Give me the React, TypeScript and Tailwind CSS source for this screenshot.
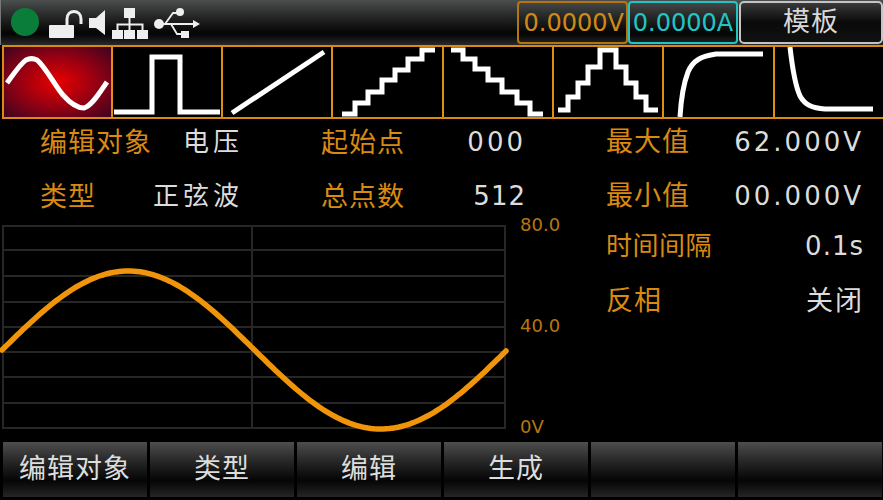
const cjk = { fontFamily: '"DejaVu Sans", "Noto Sans CJK SC", sans-serif' };

const cells: { x: number; w: number; d: string; active?: boolean }[] = [
  { x: 4, w: 109, d: "M7 83 C13 75 20 64 26 60 C30 58 33 58 37 60 C45 66 55 86 63 95 C70 103 78 108 84 108 C92 106 100 92 107 82", active: true },
  { x: 113, w: 110, d: "M114 112 H152 V57 H180 V112 H220" },
  { x: 223, w: 110, d: "M232 113 L324 52" },
  { x: 333, w: 111, d: "M342 114 H355 V103 H368 V92 H382 V80 H395 V70 H408 V59 H422 V50 H435" },
  { x: 444, w: 110, d: "M451 50 H463 V59 H475 V69 H488 V80 H502 V92 H517 V103 H530 V114 H543" },
  { x: 554, w: 110, d: "M558 110 H568 V97 H578 V83 H588 V67 H600 V50 H616 V67 H626 V83 H636 V97 H646 V110 H658" },
  { x: 664, w: 111, d: "M680 117 C681 100 683 85 688 72 C693 60 702 56 716 54 H763" },
  { x: 775, w: 108, d: "M790 47 C792 65 795 85 800 96 C805 105 812 108 825 109 H873" },
];

function sinePath() {
  const pts: string[] = [];
  for (let x = 2; x <= 507; x += 3) {
    const y = 350 - 79 * Math.sin(((x - 2) / 505) * 2 * Math.PI);
    pts.push(`${x},${(y - 223).toFixed(1)}`);
  }
  return "M" + pts.join(" L");
}

function Pair({ label, value, lw, vw, vc }: { label: string; value: string; lw: string; vw: string; vc: string }) {
  return (
    <div className="flex items-center">
      <span className={`${lw} whitespace-nowrap text-[27px] leading-none tracking-[1px] text-[#d98a12]`}>{label}</span>
      <span className={`${vw} ${vc} whitespace-nowrap text-right leading-none text-[#dcdcdc]`}>{value}</span>
    </div>
  );
}

export default function App() {
  return (
    <div className="flex h-[500px] w-[883px] flex-col overflow-hidden bg-black" style={cjk}>
      {/* status bar */}
      <div className="flex h-[45px] items-center justify-between border-l border-l-[#777] bg-gradient-to-b from-[#4b4f4d] via-[#050505] via-75% to-[#2a2a2a]">
        <svg width="205" height="45" viewBox="0 0 205 45">
          <circle cx="24" cy="22" r="14" fill="#0a7d3b" />
          <rect x="48" y="25" width="25" height="13" rx="1" fill="#eee" />
          <path d="M66 25 V19 C66 9 80 9 80 19 V24" fill="none" stroke="#eee" strokeWidth="3" />
          <path d="M88 18 H95 L104 10 V35 L95 28 H88 Z" fill="#eee" />
          <g fill="#eee">
            <rect x="123" y="8" width="11" height="10" />
            <rect x="111" y="30" width="11" height="9" />
            <rect x="123" y="30" width="11" height="9" />
            <rect x="136" y="30" width="11" height="9" />
          </g>
          <path d="M128.500 18 V30 M116.500 30 V24.500 H141.500 V30" fill="none" stroke="#eee" strokeWidth="2" />
          <circle cx="158" cy="24" r="5" fill="#eee" />
          <circle cx="179" cy="12" r="4" fill="#eee" />
          <rect x="180" y="31" width="8" height="7" fill="#eee" />
          <path d="M158 24 H194 M164 24 L172 13 H176 M170 24 L176 34 H181" fill="none" stroke="#eee" strokeWidth="1.800" />
          <path d="M192 20 L199 24 L192 28 Z" fill="#eee" />
        </svg>
        <div className="flex h-full items-center py-px">
          <div className="flex h-[43px] w-[111px] items-center justify-end rounded-[4px] border-2 border-[#b5750f] pr-[2px] text-[24px] text-[#cf8a17]">0.0000V</div>
          <div className="flex h-[43px] w-[110px] items-center justify-center rounded-[4px] border-2 border-[#22c4c4] text-[24px] text-[#1fc6c6]">0.0000A</div>
          <div className="ml-px flex h-[43px] w-[144px] items-center justify-center rounded-[5px] border-2 border-[#c4c4c4] bg-gradient-to-b from-[#3a3a3a] via-[#0a0a0a] to-[#111] text-[27px] tracking-[1px] text-[#d8d8d8]">模板</div>
        </div>
      </div>

      {/* waveform strip */}
      <div className="ml-[2px] flex h-[74px] border-y-2 border-[#d98a12]">
        <div className="w-[2px] bg-[#d98a12]" />
        {cells.map((c) => (
          <div
            key={c.x}
            className={`shrink-0 border-r-2 border-[#e0900f] ${c.active ? "bg-[radial-gradient(ellipse_at_center,#e80000_0%,#a00010_45%,#3c0420_100%)]" : "bg-black"}`}
            style={{ width: c.w, ...(c.x === 775 ? { borderRightWidth: 0 } : {}) }}
          >
            <svg width={c.w - 2} height="70" viewBox={`${c.x} 47 ${c.w - 2} 70`} className="block">
              <path d={c.d} fill="none" stroke="#fff" strokeWidth="5" strokeLinejoin={c.x < 112 || c.x > 660 || c.x === 223 ? "round" : "miter"} />
            </svg>
          </div>
        ))}
      </div>

      {/* main */}
      <div className="flex min-h-0 flex-1">
        <div className="flex w-[598px] shrink-0 flex-col">
          <div className="flex h-[46px] items-center">
            <div className="ml-[40px]"><Pair label="编辑对象" value="电压" lw="w-[113px]" vw="w-[90px]" vc="text-[26px] tracking-[4px]" /></div>
            <div className="ml-[78px]"><Pair label="起始点" value="000" lw="w-[85px]" vw="w-[120px]" vc="text-[26px] tracking-[3px]" /></div>
          </div>
          <div className="flex h-[58px] items-center pt-[4px]">
            <div className="ml-[40px]"><Pair label="类型" value="正弦波" lw="w-[113px]" vw="w-[90px]" vc="text-[26px] tracking-[4px]" /></div>
            <div className="ml-[78px]"><Pair label="总点数" value="512" lw="w-[85px]" vw="w-[120px]" vc="text-[26px] tracking-[1px]" /></div>
          </div>
          <div className="flex h-[212px]">
            <svg width="512" height="212" viewBox="0 0 512 212" className="block shrink-0">
              <g stroke="#262626" strokeWidth="2" fill="none">
                <rect x="3" y="3" width="502" height="202" />
                <path d="M3 27 H505 M3 53 H505 M3 79 H505 M3 104 H505 M3 129 H505 M3 154 H505 M3 180 H505 M252 3 V205" />
              </g>
              <path d={sinePath()} fill="none" stroke="#f0940a" strokeWidth="5.500" strokeLinecap="round" />
            </svg>
            <div className="-mt-[10px] ml-[8px] flex h-[226px] shrink-0 flex-col justify-between text-[18px] leading-[24px] text-[#b8760f]">
              <span>80.0</span>
              <span>40.0</span>
              <span>0V</span>
            </div>
          </div>
        </div>
        <div className="flex w-[266px] shrink-0 flex-col pl-[8px]">
          <div className="flex h-[46px] items-center justify-between"><span className="text-[27px] tracking-[1px] text-[#d98a12]">最大值</span><span className="text-[26px] tracking-[3px] text-[#dcdcdc]">62.000V</span></div>
          <div className="flex h-[62px] items-center justify-between"><span className="text-[27px] tracking-[1px] text-[#d98a12]">最小值</span><span className="text-[26px] tracking-[3px] text-[#dcdcdc]">00.000V</span></div>
          <div className="flex h-[39px] items-center justify-between"><span className="text-[26px] tracking-[0.5px] text-[#d98a12]">时间间隔</span><span className="text-[26px] tracking-[1px] text-[#dcdcdc]">0.1s</span></div>
          <div className="flex h-[71px] items-center justify-between"><span className="text-[27px] tracking-[1px] text-[#d98a12]">反相</span><span className="text-[27px] tracking-[2px] text-[#dcdcdc]">关闭</span></div>
        </div>
      </div>

      {/* soft keys */}
      <div className="flex h-[58px] gap-[3px] pb-[3px] pl-[3px]">
        {["编辑对象", "类型", "编辑", "生成", "", ""].map((t, i) => (
          <div
            key={i}
            className="flex h-[55px] w-[144px] items-center justify-center bg-gradient-to-b from-[#4e4e4e] via-[#060606] via-70% to-[#262626] text-[27px] tracking-[1px] text-[#dddddd]"
          >
            {t}
          </div>
        ))}
      </div>
    </div>
  );
}
